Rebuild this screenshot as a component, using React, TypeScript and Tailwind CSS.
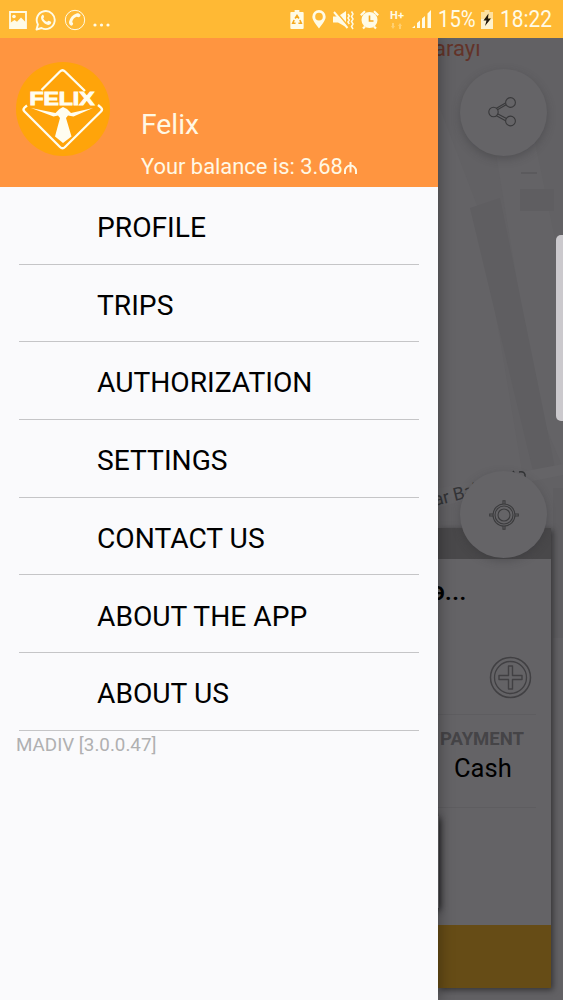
import type { ReactNode } from "react";

const MENU = [
  "PROFILE",
  "TRIPS",
  "AUTHORIZATION",
  "SETTINGS",
  "CONTACT US",
  "ABOUT THE APP",
  "ABOUT US",
];

function StatusBar() {
  return (
    <header className="relative z-20 flex h-[37.5px] shrink-0 items-center bg-[#ffb934] pt-[2px] pl-[9px] text-[#fffbe6]">
      {/* Picture */}
      <svg width="18" height="18" viewBox="0 0 18 18" fill="none">
        <path d="M1 1h16v16H1z" stroke="currentColor" strokeWidth="1.8" />
        <circle cx="5" cy="5.5" r="1.8" fill="currentColor" />
        <path d="M1 12l4.5-3 2.5 1.8L12 6.500l5 5V17H1z" fill="currentColor" />
      </svg>
      {/* WhatsApp */}
      <svg className="ml-[8px]" width="22" height="22" viewBox="0 0 22 22" fill="none">
        <path
          d="M1.5 20.5l1.4-5A9 9 0 1 1 6.5 19z"
          stroke="currentColor"
          strokeWidth="1.9"
          strokeLinejoin="round"
        />
        <path
          d="M7.2 6c-2.4 2.2-.6 5.6 1.7 7.7 2.4 2.2 5.3 3.2 7 .8.6-1.2.3-1.6-.4-2l-1.7-.8c-.9-.3-1.2 1.3-2 1.1-1.6-.6-2.8-1.8-3.5-3.3-.2-.8 1-.9.8-1.8L8.4 6c-.3-.4-.8-.4-1.2 0z"
          fill="currentColor"
        />
      </svg>
      {/* Call */}
      <svg className="ml-[7px]" width="22" height="22" viewBox="0 0 22 22" fill="none">
        <circle cx="11" cy="11" r="9.7" stroke="currentColor" strokeWidth="1" />
        <path
          d="M12.5 4.5c1.5-.6 3 0 4 1.3.3 1-.5 2.2-1.6 2.5-1 .2-1.6-.7-2.3-.5-2.2.8-3.800 2.600-4.300 4.600-.2 1 1 1.300.8 2.300-.2 1.300-1.300 2.200-2.300 1.900-1.500-.8-2-2.400-1.700-4 .8-3.800 3.700-6.800 7.400-8.100z"
          fill="currentColor"
        />
      </svg>
      <svg className="mt-[11px] ml-[7px]" width="17" height="4" viewBox="0 0 17 4" fill="currentColor">
        <circle cx="2" cy="2" r="1.6" />
        <circle cx="8.500" cy="2" r="1.6" />
        <circle cx="15" cy="2" r="1.6" />
      </svg>

      {/* Battery saver */}
      <svg className="ml-[180px] shrink-0" width="14" height="19" viewBox="0 0 14 20" fill="none">
        <path d="M4.500 0h5v2H13q1 0 1 1v16q0 1-1 1H1q-1 0-1-1V3q0-1 1-1h3.500z" fill="currentColor" />
        <path
          d="M5 9l2-3.200 2 3.200M10 10.500l1.500 3.500H8.500M5.500 14H2.500L4 10.500"
          stroke="#f5a91f"
          strokeWidth="1.700"
        />
      </svg>
      {/* Location */}
      <svg className="ml-[8px] shrink-0" width="14" height="19" viewBox="0 0 14 20" fill="none">
        <path
          d="M7 0a7 7 0 0 1 7 7c0 4-4 8-7 12.500C4 15 0 11 0 7a7 7 0 0 1 7-7zm0 3a4 4 0 1 0 0 8 4 4 0 0 0 0-8z"
          fill="currentColor"
          fillRule="evenodd"
        />
      </svg>
      {/* Vibrate, muted */}
      <svg className="ml-[7px] shrink-0" width="21" height="20" viewBox="0 0 21 20" fill="none">
        <path d="M0 6.500h5L13 1v16l-8-4.500H0z" fill="currentColor" />
        <path d="M2.500 1l13 15.500" stroke="#ffb934" strokeWidth="1.700" />
        <path d="M1 2l13.500 16" stroke="currentColor" strokeWidth="2" />
        <path
          d="M15 4l1.300 2L15 8l1.300 2L15 12l1.300 2M18.500 1.500l1.500 2.500-1.500 2.500L20 9l-1.500 2.500L20 14l-1.500 2.500L20 19"
          stroke="currentColor"
          strokeWidth="1.500"
        />
      </svg>
      {/* Alarm */}
      <svg className="ml-[6px] shrink-0" width="19" height="20" viewBox="0 0 19 20" fill="none">
        <circle cx="9.500" cy="10" r="8" fill="currentColor" />
        <path
          d="M.8 5.200L5 1.300M18.200 5.200L14 1.300M3 18.500l2-2M16 18.500l-2-2"
          stroke="currentColor"
          strokeWidth="2.200"
        />
        <path d="M9.500 5.500V11h4" stroke="#f5a91f" strokeWidth="1.600" />
      </svg>
      {/* Mobile data */}
      <div className="ml-[11px] flex w-[14px] shrink-0 flex-col items-center">
        <span className="text-[11px] leading-[10px] font-bold">H+</span>
        <svg className="mt-[2px]" width="12" height="6" viewBox="0 0 12 6" fill="#ffd070">
          <path d="M2 6L0 3h1V0h2v3h1zM9 0l2 3h-1v3H8V3H7z" />
        </svg>
      </div>
      <svg className="ml-[8px] shrink-0" width="20" height="19" viewBox="0 0 20 19" fill="currentColor">
        <path d="M0 18l3-2.500V18zM5 13l3-2.500V18H5zM10 8.500L13 6v12h-3zM15.500 3.500L19 0v18h-3.500z" />
      </svg>
      <span className="mt-[3px] ml-[6px] w-[38px] shrink-0">
        <span className="inline-block origin-left scale-x-[0.88] text-[23px] leading-[24px]">15%</span>
      </span>
      {/* Charging */}
      <svg className="ml-[5px] shrink-0" width="12" height="19" viewBox="0 0 12 19">
        <path d="M3.500 0h5v2H12v7H0V2h3.500z" fill="#ffe1a0" />
        <path d="M0 9h12v10H0z" fill="#fff3cf" />
        <path d="M7.500 3.500L2.500 10.500h3L4 16l6-7.500H7z" fill="#23180a" />
      </svg>
      <span className="mt-[3px] ml-[7px] w-[56px] shrink-0">
        <span className="inline-block origin-left scale-x-[0.91] text-[23px] leading-[24px]">18:22</span>
      </span>
    </header>
  );
}

function Logo() {
  return (
    <svg width="94" height="94" viewBox="0 0 94 94" fill="none">
      <circle cx="47" cy="47" r="47" fill="#ffa40a" />
      <path
        d="M25.500 28L44 9.500q2.500-2.500 5 0l20 19.500M11 43.500l-2.500 2q-2 2 0 4L44 85q2.500 2.500 5 0l36-35.500q2-2 0-4L82 43"
        stroke="#fffdf0"
        strokeWidth="2.300"
      />
      <text
        x="13.500"
        y="42.800"
        textLength="65"
        lengthAdjust="spacingAndGlyphs"
        fill="#fffdf0"
        stroke="#fffdf0"
        strokeWidth="0.900"
        className="font-['Liberation_Sans'] text-[17.500px] font-bold"
      >
        FELIX
      </text>
      <path
        d="M15 46l24.500 5L43.500 47l3.500-2 4 2 4 4L77 46l-19.500 8.500-5.500-1-2 2.500 5.500 18.500-8.500 6.500-8-6.500L44 56l-2-2.500-4.500 1z"
        fill="#fffdf0"
      />
    </svg>
  );
}

function Drawer() {
  return (
    <aside className="z-10 flex w-[438px] shrink-0 flex-col bg-[#fafafc] shadow-[1px_0_14px_rgba(0,0,0,0.35)]">
      <div className="flex h-[149.5px] shrink-0 bg-[#ff9540] pt-[24.500px] pl-[16px] text-[#fff8e4]">
        <Logo />
        <div className="flex flex-col pt-[47px] pl-[31px]">
          <span className="text-[28.300px] leading-[32px]">Felix</span>
          <span className="mt-[12.500px] flex items-center text-[21.900px] leading-[26px] whitespace-nowrap">
            Your balance is: 3.68
            <svg className="mt-[3px] ml-px" width="13" height="12" viewBox="0 0 13 12" fill="none">
              <path d="M1 12V9a5.500 5.500 0 0 1 11 0v3M6.500 0v10.500" stroke="currentColor" strokeWidth="2" />
            </svg>
          </span>
        </div>
      </div>
      <nav className="flex flex-col px-[19px]">
        {MENU.map((item) => (
          <a
            key={item}
            className="flex h-[77.700px] items-center border-b-[1.500px] border-[#c5c5c7] pt-[4.500px] pl-[78px] text-[28.200px] leading-[33px] whitespace-nowrap text-black"
          >
            {item}
          </a>
        ))}
      </nav>
      <span className="mt-[3px] pl-[16px] text-[18.800px] leading-[22px] text-[#b0b0b1]">MADIV [3.0.0.47]</span>
    </aside>
  );
}

function RoundButton({ children }: { children: ReactNode }) {
  return (
    <div className="flex h-[87px] w-[87px] items-center justify-center rounded-full bg-[#656467] shadow-[0_3px_8px_rgba(50,50,52,0.35)]">
      {children}
    </div>
  );
}

function RideCard() {
  return (
    <section className="relative mt-auto mb-[12.500px] flex h-[460px] w-[113px] flex-col bg-[#646366] shadow-[2px_2px_6px_rgba(20,20,22,0.6)]">
      <div className="h-[31px] bg-[#49484a]" />
      <span className="mt-[16px] -ml-[7px] text-[26px] leading-[32px] font-medium text-black">ə...</span>
      <svg className="mt-[49px] ml-[51px]" width="43" height="43" viewBox="0 0 43 43" fill="none" stroke="#414043">
        <circle cx="21.500" cy="21.500" r="20" strokeWidth="1.500" />
        <circle cx="21.500" cy="21.500" r="16" strokeWidth="1.300" />
        <path
          d="M19.500 10h4v9.500H33v4h-9.500V33h-4v-9.500H10v-4h9.500z"
          strokeWidth="1.400"
          strokeLinejoin="round"
        />
      </svg>
      <div className="mt-[15px] mr-[15px] h-px bg-[#5e5d60]" />
      <span className="mt-[13px] ml-[2px] text-[18.500px] leading-[22px] font-bold text-[#454447]">PAYMENT</span>
      <span className="mt-[3px] ml-[16px] text-[25.500px] leading-[31px] text-black">Cash</span>
      <div className="mt-[23px] mr-[15px] h-px bg-[#5e5d60]" />
      <div className="mt-auto h-[63px] bg-[#664c16]" />
      {/* Shadow of the car tile that sits under the drawer */}
      <div className="absolute top-[288px] -left-[10px] h-[92px] w-[11px] shadow-[1px_2px_7px_#19191b]" />
    </section>
  );
}

function MapPane() {
  return (
    <main className="relative flex w-[125px] flex-col overflow-hidden bg-[#626164]">
      <svg className="absolute top-0 left-0" width="125" height="963" viewBox="0 0 125 963">
        <path d="M0 65l40 105 46 275L0 470zM52 80h40l33 160v190L100 370z" fill="#646366" />
        <path d="M32 170l30-10 55 270-22 3zM82 151h34v22H82z" fill="#5f5e61" />
        <path d="M0 450l125-24v11L0 462z" fill="#656467" />
        <path d="M115 450h10v150h-10z" fill="#5f5e61" />
        <path d="M83 135h16" stroke="#535255" />
        <text x="-4" y="18" fill="#623329" className="text-[22px]">
          arayı
        </text>
        <text x="-3" y="468" fill="#343538" transform="rotate(-14 -3 468)" className="text-[18px]">
          ar Bə'
        </text>
        <path d="M75 433l2 3M81 434q7-1 6 5" stroke="#323335" strokeWidth="1.500" fill="none" />
      </svg>
      <div className="absolute top-[31px] left-[22px]">
        <RoundButton>
          <svg className="-ml-[2px]" width="30" height="30" viewBox="0 0 30 30" fill="none" stroke="#39393b" strokeWidth="1.100">
            <path d="M9 13l9.500-5.500M8 11.500l9.500-5.500M9 16.500l9.500 5M8 18.500l10 5.500" />
            <circle cx="5.500" cy="15" r="4.700" fill="#656467" />
            <circle cx="22.500" cy="5.500" r="4.900" fill="#656467" />
            <circle cx="22.500" cy="24" r="4.900" fill="#656467" />
          </svg>
        </RoundButton>
      </div>
      <RideCard />
      <div className="absolute top-[433.500px] left-[22px]">
        <RoundButton>
          <svg width="30" height="30" viewBox="0 0 30 30" fill="none" stroke="#3b3b3d" strokeWidth="1.100">
            <circle cx="15" cy="15" r="11" />
            <circle cx="15" cy="15" r="9" />
            <circle cx="15" cy="15" r="6" />
            <path d="M14 4V.7h2V4M14 26v3.300h2V26M4 14H.7v2H4M26 14h3.300v2H26" />
          </svg>
        </RoundButton>
      </div>
      {/* Edge panel handle */}
      <div className="absolute top-[197px] right-0 h-[186px] w-[7px] rounded-l-[5px] bg-[#cbc9cd]" />
    </main>
  );
}

export default function App() {
  return (
    <div className="flex h-[1000px] w-[563px] flex-col overflow-hidden font-['Roboto',sans-serif]">
      <StatusBar />
      <div className="flex min-h-0 flex-1">
        <Drawer />
        <MapPane />
      </div>
    </div>
  );
}
